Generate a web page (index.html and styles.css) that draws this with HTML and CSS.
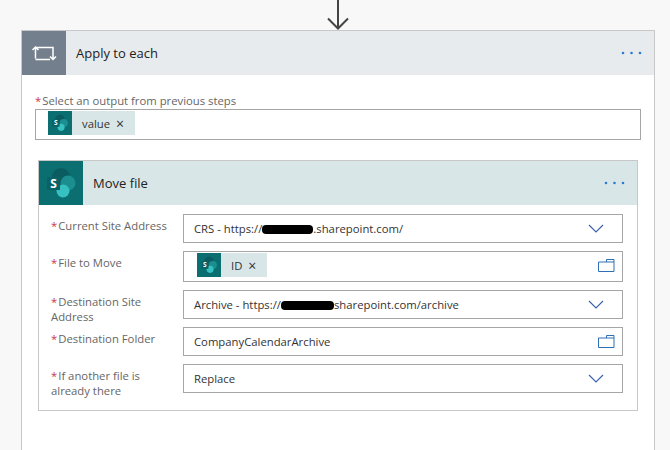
FILE: index.html
```html
<!DOCTYPE html>
<html>

<head>
    <title>Apply to each</title>
    <meta charset="UTF-8">
    <meta name="viewport" content="width=device-width, initial-scale=1.0">
    <link rel="stylesheet" href="styles.css">
</head>

<body>
    <svg width="0" height="0" class="defs">
        <symbol id="chevron" viewBox="0 0 16 10">
            <path d="M1 1l7 7 7-7" fill="none" stroke="#3c63ad" stroke-width="1.200" />
        </symbol>
        <symbol id="folder" viewBox="0 0 17 13">
            <path d="M.5 3h15.5v9.500H.5zM8.500 3V.5H16V3" fill="none" stroke="#2f6fb5" stroke-width="1" />
        </symbol>
        <symbol id="dots" viewBox="0 0 22 4">
            <circle cx="2" cy="2" r="1.300" fill="#2b7cd0" />
            <circle cx="10.500" cy="2" r="1.300" fill="#2b7cd0" />
            <circle cx="19" cy="2" r="1.300" fill="#2b7cd0" />
        </symbol>
    </svg>

    <svg class="arrow" width="24" height="30" viewBox="0 0 24 30">
        <path d="M12 0v28M2 18.500l10 10 10-10" fill="none" stroke="#444" stroke-width="2" />
    </svg>

    <div class="card">
        <div class="card-header header-grey">
            <div class="icon-box icon-grey">
                <svg width="44" height="44" viewBox="0 0 44 44">
                    <path d="M13.500 27.500V16.500H31V28M10.500 19l3-3 3 3M28 25.500l3 3 3-3M13.500 28.500H28" fill="none" stroke="#fff" stroke-width="1.500" />
                </svg>
            </div>
            <span class="card-title">Apply to each</span>
            <svg class="dots" width="22" height="4"><use href="#dots" /></svg>
        </div>

        <div class="card-body">
            <label class="output-label"><span class="req">*</span>Select an output from previous steps</label>
            <div class="input output-input">
                <span class="token">
                    <svg class="token-logo" width="24" height="24" viewBox="0 0 44 44">
                        <circle cx="22" cy="16" r="9" fill="#0a5c60" />
                        <circle cx="29" cy="22" r="7.500" fill="#1b8f90" />
                        <circle cx="24" cy="30" r="6.500" fill="#37c0c0" />
                        <rect x="8" y="16" width="13" height="13" fill="#0b6266" />
                        <text x="14.500" y="26.500" class="sp-s">S</text>
                    </svg>
                    <span class="token-text">value</span>
                    <span class="token-x">&times;</span>
                </span>
            </div>

            <div class="inner-card">
                <div class="card-header header-teal">
                    <div class="icon-box icon-teal">
                        <svg width="44" height="44" viewBox="0 0 44 44">
                            <circle cx="22" cy="16" r="9" fill="#0a5c60" />
                            <circle cx="29" cy="22" r="7.500" fill="#1b8f90" />
                            <circle cx="24" cy="30" r="6.500" fill="#37c0c0" />
                            <rect x="8" y="16" width="13" height="13" fill="#0b6266" />
                            <text x="14.500" y="26.500" class="sp-s">S</text>
                        </svg>
                    </div>
                    <span class="card-title">Move file</span>
                    <svg class="dots" width="22" height="4"><use href="#dots" /></svg>
                </div>

                <div class="fields">
                    <div class="field">
                        <label><span class="req">*</span>Current Site Address</label>
                        <div class="input">
                            <span class="value">CRS - https://<span class="redact redact-a"></span>.sharepoint.com/</span>
                            <svg class="chevron" width="16" height="10"><use href="#chevron" /></svg>
                        </div>
                    </div>
                    <div class="field field-token">
                        <label><span class="req">*</span>File to Move</label>
                        <div class="input">
                            <span class="token">
                                <svg class="token-logo" width="24" height="24" viewBox="0 0 44 44">
                                    <circle cx="22" cy="16" r="9" fill="#0a5c60" />
                                    <circle cx="29" cy="22" r="7.500" fill="#1b8f90" />
                                    <circle cx="24" cy="30" r="6.500" fill="#37c0c0" />
                                    <rect x="8" y="16" width="13" height="13" fill="#0b6266" />
                                    <text x="14.500" y="26.500" class="sp-s">S</text>
                                </svg>
                                <span class="token-text">ID</span>
                                <span class="token-x">&times;</span>
                            </span>
                            <svg class="folder" width="17" height="13"><use href="#folder" /></svg>
                        </div>
                    </div>
                    <div class="field">
                        <label><span class="req">*</span>Destination Site<br>Address</label>
                        <div class="input">
                            <span class="value">Archive - https://<span class="redact redact-b"></span>sharepoint.com/archive</span>
                            <svg class="chevron" width="16" height="10"><use href="#chevron" /></svg>
                        </div>
                    </div>
                    <div class="field">
                        <label><span class="req">*</span>Destination Folder</label>
                        <div class="input">
                            <span class="value">CompanyCalendarArchive</span>
                            <svg class="folder" width="17" height="13"><use href="#folder" /></svg>
                        </div>
                    </div>
                    <div class="field">
                        <label><span class="req">*</span>If another file is<br>already there</label>
                        <div class="input">
                            <span class="value">Replace</span>
                            <svg class="chevron" width="16" height="10"><use href="#chevron" /></svg>
                        </div>
                    </div>
                </div>
            </div>
        </div>
    </div>
</body>

</html>
```

FILE: styles.css
```css
html,
body {
    height: 450px;
    overflow: hidden;
}

body {
    margin: 0;
    font-family: "Open Sans", "Liberation Sans", sans-serif;
    background-color: #f8f8f8;
    color: #333;
}

.defs {
    display: block;
    height: 0;
}

.sp-s {
    font-family: "Open Sans", sans-serif;
    font-size: 12px;
    font-weight: 700;
    fill: #fff;
    text-anchor: middle;
}

.arrow {
    display: block;
    margin-left: 326px;
}

.card {
    width: 632px;
    height: 430px;
    margin-left: 21px;
    background-color: #fff;
    border: 1px solid #c8c8c8;
    border-bottom: none;
}

.card-header {
    display: flex;
    align-items: center;
    height: 44px;
}

.header-grey {
    background-color: #e8ebee;
}

.header-teal {
    background-color: #d9e6e8;
}

.icon-box {
    width: 44px;
    height: 44px;
    flex: none;
}

.icon-box svg {
    display: block;
}

.icon-grey {
    background-color: #737f8d;
}

.icon-teal {
    background-color: #0b6e70;
}

.card-title {
    margin-left: 10px;
    font-size: 13px;
    color: #222;
}

.dots {
    margin-left: auto;
    margin-right: 11px;
}

.card-body {
    padding: 20px 13px 0 13px;
}

.output-label {
    display: block;
    height: 14px;
    font-size: 11.300px;
    line-height: 12px;
    color: #666;
}

.req {
    color: #c8384f;
    margin-right: 1px;
}

.input {
    display: flex;
    align-items: center;
    flex: 1;
    box-sizing: border-box;
    min-width: 0;
    padding: 0 7px 0 10px;
    background-color: #fff;
    border: 1px solid #a6a6a6;
    font-size: 11.300px;
    color: #333;
}

.output-input {
    height: 31px;
    width: 606px;
    padding: 1px 12px 4px 12px;
    flex: none;
}

.token {
    display: flex;
    align-items: center;
    height: 24px;
    background-color: #d9e6e8;
}

.token-logo {
    display: block;
    background-color: #0b6e70;
}

.token-text {
    margin-left: 10px;
}

.token-x {
    margin: 1px 11px 0 6px;
    font-size: 14px;
    line-height: 1;
}

.inner-card {
    box-sizing: border-box;
    width: 600px;
    margin: 20px 0 0 3px;
    border: 1px solid #c8c8c8;
}

.fields {
    padding: 9px 14px 17px 12px;
}

.field {
    display: flex;
    height: 29px;
    margin-bottom: 8px;
}

.field:last-child {
    margin-bottom: 0;
}

.field-token {
    height: 31px;
}

.field-token .input {
    padding: 1px 7px 4px 13px;
}

.field label {
    flex: none;
    width: 132px;
    font-size: 11.300px;
    line-height: 15px;
    color: #666;
    padding-top: 4px;
}

.value {
    white-space: nowrap;
}

.chevron,
.folder {
    margin-left: auto;
}

.chevron {
    margin-right: 11px;
}

.redact {
    display: inline-block;
    height: 9px;
    background-color: #000;
    border-radius: 4px;
    vertical-align: -1px;
}

.redact-a {
    width: 51px;
}

.redact-b {
    width: 53px;
}
```
